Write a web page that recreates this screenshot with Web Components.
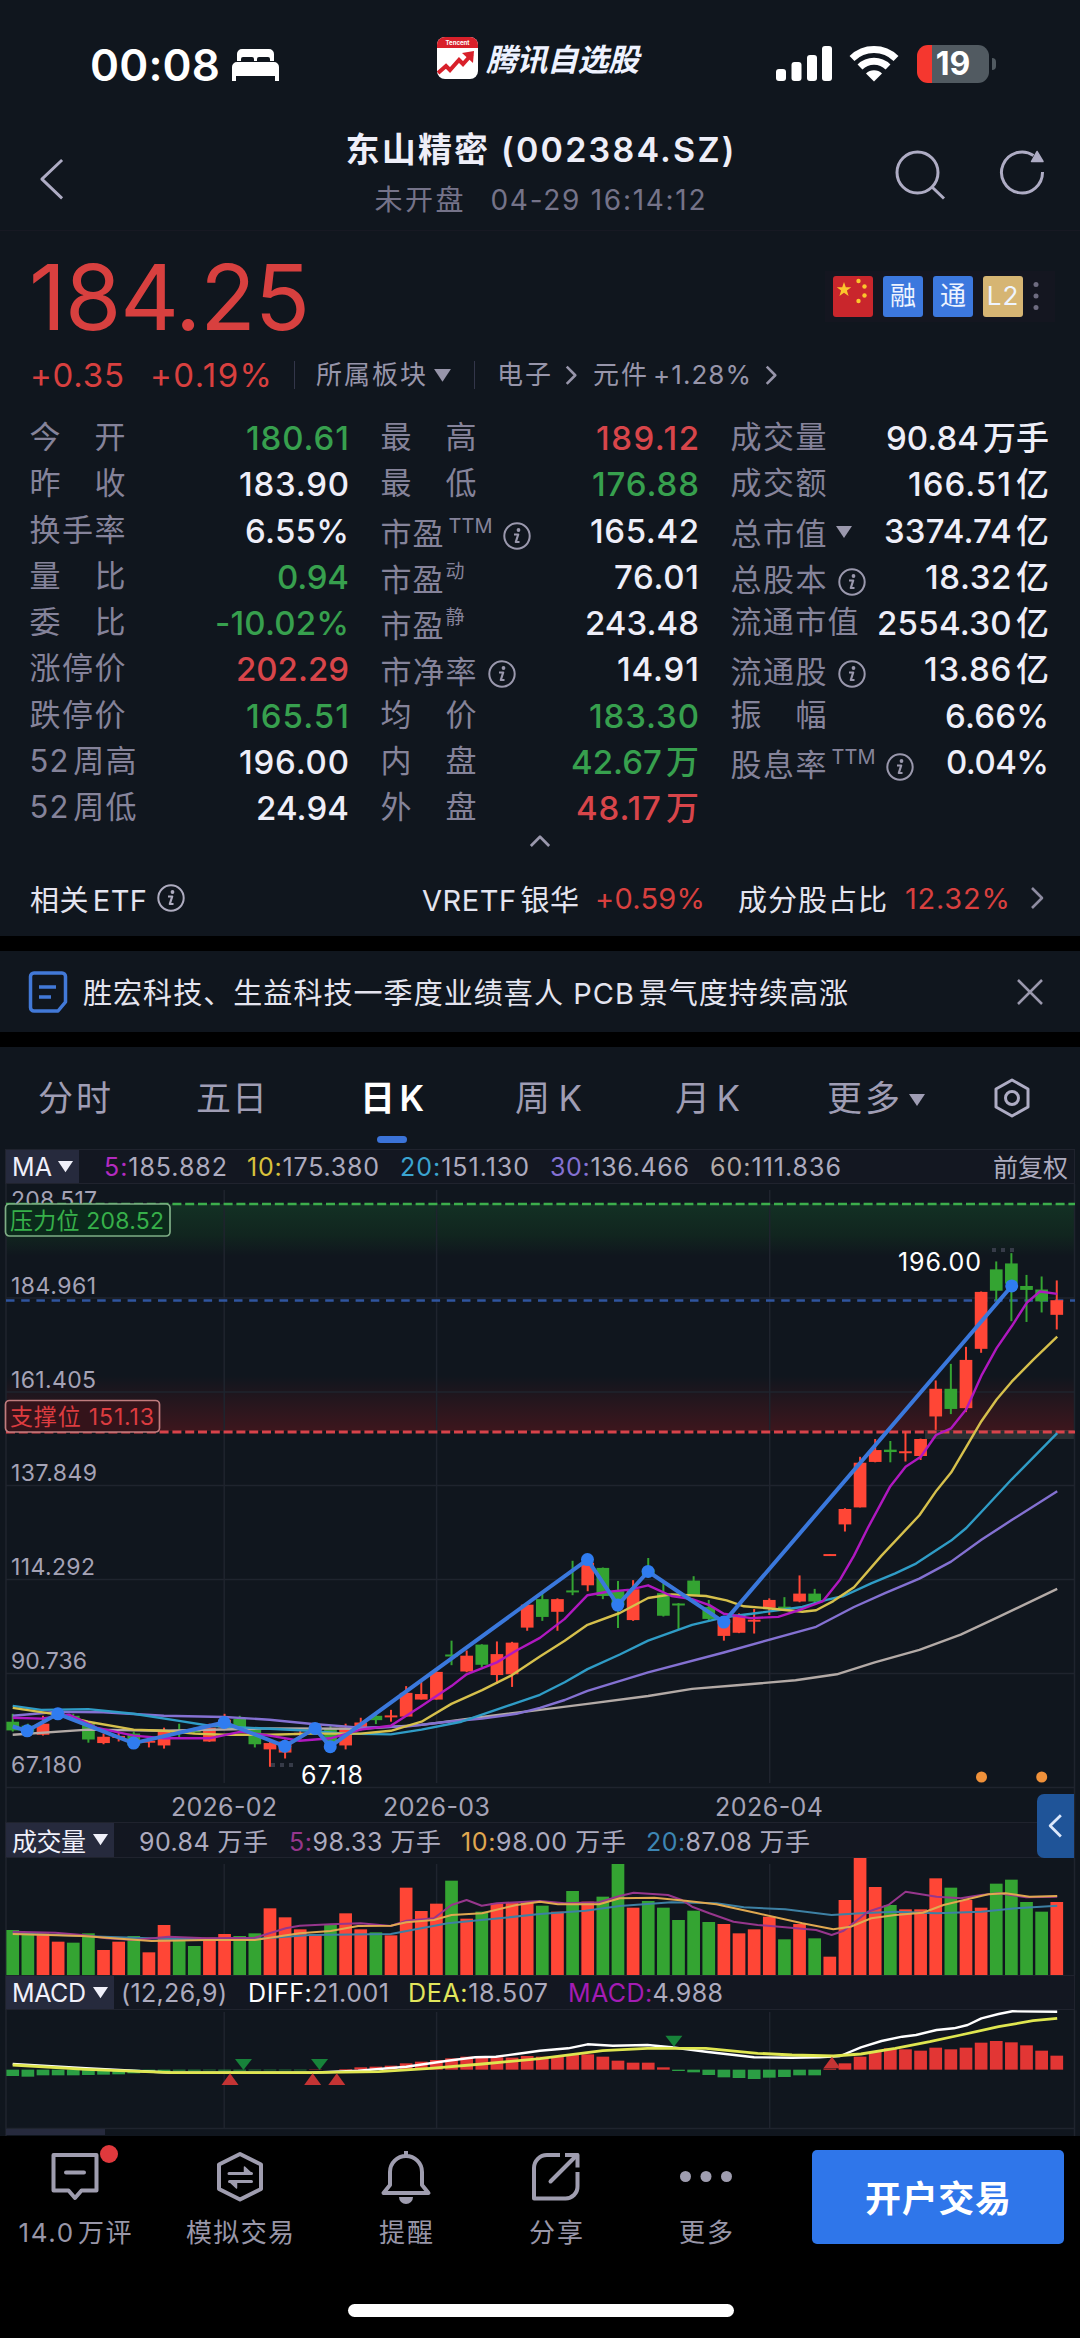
<!DOCTYPE html>
<html lang="zh-CN">
<head>
<meta charset="utf-8">
<meta name="viewport" content="width=1080">
<title>东山精密(002384.SZ)</title>
<style>
  body {
    margin: 0;
    background: #000;
    --bg: #10161e;
    --red: #d8403f;
    --muted: #85839a;
    --soft: #adabbf;
    --text: #eeeef8;
    font-family: Inter, "Noto Sans CJK SC", sans-serif;
    text-autospace: normal;
    color: var(--text);
  }
</style>
</head>
<body>
<stock-page></stock-page>

<script>
/**
 * Single-line label whose letter spacing is adjusted to fill a given width.
 * @extends HTMLElement
 */
class FitText extends HTMLElement {
  constructor() {
    super();
    this.attachShadow({ mode: "open" });
    // no whitespace around the slot: it would count towards the width
    this.shadowRoot.innerHTML =
      "<style>:host { display: inline-block; flex: none; white-space: pre; }</style><slot></slot>";
  }

  connectedCallback() {
    const target = Number(this.getAttribute("w"));
    const count = this.textContent.length;
    if (!target || count < 2) return;
    const spacing = (target - this.getBoundingClientRect().width) / (count - 1);
    const margin = parseFloat(getComputedStyle(this).marginRight) || 0;
    this.style.letterSpacing = `${spacing}px`;
    this.style.marginRight = `${margin - spacing}px`;
  }
}

/** Path data for the line icons, drawn in their own view boxes. */
const ICONS = {
  back: { box: "0 0 26 44", d: '<path d="M24 2 3 22 24 42"/>' },
  search: { box: "0 0 52 50", d: '<circle cx="22.500" cy="22.500" r="20.500"/><path d="m37 37 12 11.500"/>' },
  refresh: {
    box: "0 0 46 46",
    d: '<path d="M42.500 22A20.500 20.500 0 1 1 33.500 5.500"/><path d="M37 1.500 43 11.500H31.500z" fill="currentColor" stroke-width="1.500"/>',
  },
  info: {
    box: "0 0 28 28",
    d: '<circle cx="14" cy="14" r="12.700" stroke-width="2"/><circle cx="15.500" cy="8" r="1.900" fill="currentColor" stroke="none"/><path d="M11 12.500h4.200L12.800 20h3.700" stroke-width="2.200"/>',
  },
  chevron: { box: "0 0 14 24", d: '<path d="m2 2 10 10L2 22"/>' },
  up: { box: "0 0 24 14", d: '<path d="M2 12 12 2l10 10"/>' },
  down: { box: "0 0 18 14", d: '<path d="M1 1h16L9 13z" fill="currentColor" stroke="none"/>' },
  close: { box: "0 0 28 28", d: '<path d="m2 2 24 24M26 2 2 26"/>' },
  settings: {
    box: "0 0 36 40",
    d: '<path d="M18 2 34 11v18l-16 9L2 29V11z"/><circle cx="18" cy="20" r="6.500"/>',
  },
  note: {
    box: "0 0 40 42",
    d: '<path d="M6 2h28a3.500 3.500 0 0 1 3.500 3.500V31l-7.500 9H6a3.500 3.500 0 0 1-3.500-3.500v-31A3.500 3.500 0 0 1 6 2z"/><path d="M11 16h17M11 26h12"/>',
  },
  comment: {
    box: "0 0 52 52",
    d: '<path d="M4.500 5h43v35.500H32.500L26 48l-6.500-7.500h-15z"/><path d="M17 22.500h18" stroke-linecap="round"/>',
  },
  swap: {
    box: "0 0 52 52",
    d: '<path d="M26 4 47 14.500v24.500L26 49.500 5 39V14.500z"/><g stroke-width="3"><path d="M15 23.500h22.500M15.500 31.500h22" stroke-linecap="round"/><path d="M30.500 17v6.500h7zM22.500 38v-6.500h-7z" fill="currentColor" stroke-width="1.500"/></g>',
  },
  bell: {
    box: "0 0 52 54",
    d: '<path d="M26 1v5M10 35V22a16 16 0 0 1 32 0v13l6.500 8h-45z"/><path d="M19 47h14a7 7 0 0 1-14 0z" fill="currentColor" stroke="none"/>',
  },
  share: {
    box: "0 0 52 52",
    d: '<path d="M30 5H17A13 13 0 0 0 4 18v30.500h31A12 12 0 0 0 47.500 36V22"/><path d="M20.500 31.500 47 5"  stroke-linecap="round"/><path d="M35 5h12.500v12.500"/>',
  },
  dots: {
    box: "0 0 52 52",
    d: '<g fill="currentColor" stroke="none"><circle cx="5.500" cy="26.500" r="5.500"/><circle cx="26" cy="26.500" r="5.500"/><circle cx="46.500" cy="26.500" r="5.500"/></g>',
  },
};

/** Line icon picked by its name attribute. */
class LineIcon extends HTMLElement {
  connectedCallback() {
    const icon = ICONS[this.getAttribute("name")];
    const width = this.getAttribute("w");
    const stroke = this.getAttribute("stroke") ?? "3";
    if (!this.shadowRoot) this.attachShadow({ mode: "open" });
    this.shadowRoot.innerHTML = `
      <style>
        :host { display: block; flex: none; width: ${width}px; }
        svg { display: block; width: 100%; overflow: visible; }
      </style>
      <svg viewBox="${icon.box}" fill="none" stroke="currentColor" stroke-width="${stroke}"
        stroke-linejoin="round">${icon.d}</svg>`;
  }
}

/** Phone status bar with the app mark in the middle. */
class StatusBar extends HTMLElement {
  connectedCallback() {
    this.attachShadow({ mode: "open" }).innerHTML = `
      <style>
        :host { display: flex; height: 110px; align-items: flex-start; box-sizing: border-box; color: #fff; }
        .time { margin: 43px 0 0 90px; font-size: 44px; font-weight: 600; line-height: 44px; }
        .bed { margin: 48px 0 0 12px; }
        .mark { margin: 37px 0 0 158px; }
        .name { margin: 40px 0 0 8px; font-size: 31px; font-weight: 700; font-style: italic; line-height: 40px; color: #eef2ff; }
        .signal { margin: 46px 0 0 137px; }
        .wifi { margin: 45px 0 0 16px; }
        .battery {
          margin: 45px 0 0 18px; width: 72px; height: 38px; border-radius: 11px;
          background: linear-gradient(90deg, #f5372f 15px, #515a61 15px);
          font-size: 32px; font-weight: 700; line-height: 38px; text-align: center;
        }
        .nub { margin: 58px 0 0 3px; width: 4px; height: 12px; border-radius: 0 4px 4px 0; background: #515a61; }
      </style>
      <fit-text class="time" w="130">00:08</fit-text>
      <svg class="bed" width="47" height="34" viewBox="0 0 47 34" fill="#fff">
        <path d="M5 13V6a5 5 0 0 1 5-5h27a5 5 0 0 1 5 5v7h-4v-2a2 2 0 0 0-2-2H27a2 2 0 0 0-2 2v2h-3v-2a2 2 0 0 0-2-2H11a2 2 0 0 0-2 2v2z"/>
        <path d="M0 33V19a5 5 0 0 1 5-5h37a5 5 0 0 1 5 5v14h-4v-5H4v5z"/>
      </svg>
      <svg class="mark" width="41" height="42" viewBox="0 0 41 42">
        <rect width="41" height="42" rx="8" fill="#fff"/>
        <path d="M0 11V8a8 8 0 0 1 8-8h25a8 8 0 0 1 8 8v3z" fill="#d8202a"/>
        <text x="20.500" y="8" font-size="6" font-weight="700" fill="#fff" text-anchor="middle">Tencent</text>
        <path d="m1 36 8-7 4 4 9-10 4 4 9-10" fill="none" stroke="#d8202a" stroke-width="4"/>
        <path d="m25 16 12-2-1 12z" fill="#d8202a"/>
      </svg>
      <fit-text class="name" w="153">腾讯自选股</fit-text>
      <svg class="signal" width="57" height="36" viewBox="0 0 57 36" fill="#fff">
        <rect y="23" width="10" height="12" rx="3"/><rect x="15.500" y="16" width="10" height="19" rx="3"/>
        <rect x="31" y="9" width="10" height="26" rx="3"/><rect x="46" width="10" height="35" rx="3"/>
      </svg>
      <svg class="wifi" width="50" height="37" viewBox="0 0 50 37" fill="none" stroke="#fff" stroke-width="7">
        <path d="M3 13.500a31.500 31.500 0 0 1 44 0"/><path d="M11 22a20 20 0 0 1 28 0"/>
        <path d="m17 28.500 8 8 8-8a11.500 11.500 0 0 0-16 0z" fill="#fff" stroke="none"/>
      </svg>
      <div class="battery">19</div><div class="nub"></div>`;
  }
}

/** Title bar with back, search and refresh. */
class NavBar extends HTMLElement {
  connectedCallback() {
    this.attachShadow({ mode: "open" }).innerHTML = `
      <style>
        :host { display: flex; height: 121px; box-sizing: border-box; border-bottom: 1px solid #171923; color: #aeacc4; }
        .back { margin: 48px 0 0 39px; }
        .titles { flex: 1; display: flex; flex-direction: column; align-items: center; gap: 14px; padding: 20px 0 0 121px; }
        .name { font-size: 34px; font-weight: 600; line-height: 40px; color: var(--text); }
        .state { display: flex; gap: 27px; font-size: 28px; line-height: 32px; color: #757389; }
        .search { margin: 40px 0 0 0; }
        .refresh { margin: 40px 34px 0 53px; }
      </style>
      <line-icon class="back" name="back" w="25"></line-icon>
      <div class="titles">
        <fit-text class="name" w="389">东山精密 (002384.SZ)</fit-text>
        <div class="state"><fit-text w="89">未开盘</fit-text><fit-text w="215">04-29 16:14:12</fit-text></div>
      </div>
      <line-icon class="search" name="search" w="52"></line-icon>
      <line-icon class="refresh" name="refresh" w="46"></line-icon>`;
  }
}

/**
 * One label and value of the quote grid.
 * Attributes: label, sup, icon, value, w (value width), tone.
 */
class StatCell extends HTMLElement {
  connectedCallback() {
    const attr = (name) => this.getAttribute(name) ?? "";
    const sup = attr("sup");
    const icon = attr("icon");
    const lowered = sup || icon;
    const latin = /[A-Z]/.test(sup);
    const colors = { up: "#d8454a", down: "#37a04e" };
    this.attachShadow({ mode: "open" }).innerHTML = `
      <style>
        :host { display: flex; justify-content: space-between; height: 46.300px; line-height: 46.300px; }
        .label { display: flex; font-size: 31px; color: var(--muted); margin-left: -1.500px; padding-top: ${lowered ? 4 : 0}px; }
        .label fit-text { margin-top: -1px; }
        .sup { font-size: ${latin ? 20 : 19}px; line-height: 30px; margin-left: ${latin ? 5 : 2}px; }
        .info { margin: 10px 0 0 ${sup ? 10 : 11}px; color: #9a98ad; }
        .down { margin: 13px 0 0 8px; color: #9a98ad; }
        .value { font-size: 33px; font-weight: 500; color: ${colors[attr("tone")] ?? "var(--text)"}; }
      </style>
      <span class="label"><fit-text w="${attr("lw") || 96}">${attr("label")}</fit-text>
        ${sup ? `<fit-text class="sup" ${latin ? 'w="44"' : ""}>${sup}</fit-text>` : ""}
        ${icon ? `<line-icon class="${icon}" name="${icon}" w="${icon === "info" ? 28 : 18}"></line-icon>` : ""}
      </span>
      <fit-text class="value" w="${attr("w")}">${attr("value")}</fit-text>`;
  }
}

const STATS = [
  [
    ["今　开", "180.61", 103, "down"],
    ["昨　收", "183.90", 110],
    ["换手率", "6.55%", 104],
    ["量　比", "0.94", 72, "down"],
    ["委　比", "-10.02%", 134, "down"],
    ["涨停价", "202.29", 113, "up"],
    ["跌停价", "165.51", 103, "down"],
    ["52周高", "196.00", 110, "", { lw: 107 }],
    ["52周低", "24.94", 93, "", { lw: 107 }],
  ],
  [
    ["最　高", "189.12", 103, "up"],
    ["最　低", "176.88", 107, "down"],
    ["市盈", "165.42", 109, "", { sup: "TTM", icon: "info", lw: 63 }],
    ["市盈", "76.01", 85, "", { sup: "动", lw: 63 }],
    ["市盈", "243.48", 114, "", { sup: "静", lw: 63 }],
    ["市净率", "14.91", 82, "", { icon: "info" }],
    ["均　价", "183.30", 110, "down"],
    ["内　盘", "42.67万", 128, "down"],
    ["外　盘", "48.17万", 123, "up"],
  ],
  [
    ["成交量", "90.84万手", 163],
    ["成交额", "166.51亿", 141],
    ["总市值", "3374.74亿", 165, "", { icon: "down" }],
    ["总股本", "18.32亿", 124, "", { icon: "info" }],
    ["流通市值", "2554.30亿", 172, "", { lw: 128 }],
    ["流通股", "13.86亿", 125, "", { icon: "info" }],
    ["振　幅", "6.66%", 104],
    ["股息率", "0.04%", 103, "", { sup: "TTM", icon: "info" }],
  ],
];

/** Price, badges, sector links, the quote grid and the ETF row. */
class QuotePanel extends HTMLElement {
  connectedCallback() {
    const cell = ([label, value, w, tone = "", extra = {}]) => {
      const more = Object.entries(extra).map(([k, v]) => `${k}="${v}"`).join(" ");
      return `<stat-cell label="${label}" value="${value}" w="${w}" tone="${tone}" ${more}></stat-cell>`;
    };
    this.attachShadow({ mode: "open" }).innerHTML = `
      <style>
        :host { display: flex; flex-direction: column; height: 705px; box-sizing: border-box; padding: 0 31px; }
        .top { display: flex; align-items: center; height: 132px; }
        .price { font-size: 91px; line-height: 132px; margin-left: -2px; color: var(--red); }
        .badges { display: flex; align-items: center; gap: 10px; margin: 0 -6px 2px auto; padding: 5px 16px 5px 8px; background: #141620; }
        .badge { width: 40px; height: 41px; border-radius: 3px; font-size: 26px; line-height: 40px; text-align: center; color: #eef4ff; background: #3c78de; }
        .cn { background: #c9262c; }
        .l2 { background: #d6b573; font-size: 26px; letter-spacing: 1px; }
        .more { width: 6px; height: 30px; }
        .change { display: flex; align-items: center; height: 24px; line-height: 24px; font-size: 26px; color: #9795aa; }
        .move { font-size: 33px; color: var(--red); }
        .line { width: 1px; height: 28px; background: #33364a; }
        .grid { display: grid; grid-template-columns: 318px 317px 317px; column-gap: 33px; margin-top: 28px; }
        .fold { display: flex; justify-content: center; padding-top: 3px; color: #9a98ad; }
        .etf { display: flex; align-items: center; height: 74px; box-sizing: border-box; padding-bottom: 2px; margin-top: auto; font-size: 29px; color: #e4e4ef; }
        .up { color: var(--red); }
      </style>
      <div class="top">
        <fit-text class="price" w="281">184.25</fit-text>
        <div class="badges">
          <svg class="badge cn" viewBox="0 0 40 41" fill="#fbc52c">
            <path d="m11 6 1.800 5.300h5.500l-4.400 3.300 1.700 5.400-4.600-3.300L6.400 20l1.700-5.400-4.400-3.300h5.500z"/>
            <circle cx="25.500" cy="5" r="2.200"/><circle cx="31.500" cy="10.500" r="2.200"/><circle cx="31.500" cy="19.500" r="2.200"/><circle cx="25.500" cy="25" r="2.200"/>
          </svg>
          <div class="badge">融</div><div class="badge">通</div><div class="badge l2">L2</div>
          <svg class="more" viewBox="0 0 6 30" fill="#6e6c80"><circle cx="3" cy="3.500" r="2.500"/><circle cx="3" cy="15" r="2.500"/><circle cx="3" cy="26.500" r="2.500"/></svg>
        </div>
      </div>
      <div class="change">
        <fit-text class="move" w="94" style="margin-left:-1px">+0.35</fit-text>
        <fit-text class="move" w="122" style="margin-left:26px">+0.19%</fit-text>
        <span class="line" style="margin:0 21px 0 22px"></span>
        <fit-text w="110">所属板块</fit-text>
        <line-icon name="down" w="19" style="margin-left:7px"></line-icon>
        <span class="line" style="margin:0 22px"></span>
        <fit-text w="54">电子</fit-text>
        <line-icon name="chevron" w="12" stroke="3" style="margin-left:14px"></line-icon>
        <fit-text w="54" style="margin-left:16px">元件</fit-text>
        <fit-text w="98" style="margin-left:6px">+1.28%</fit-text>
        <line-icon name="chevron" w="12" style="margin-left:14px"></line-icon>
      </div>
      <div class="grid">${STATS.map((col) => `<div>${col.map(cell).join("")}</div>`).join("")}</div>
      <div class="fold"><line-icon name="up" w="22"></line-icon></div>
      <div class="etf">
        <fit-text w="117" style="margin-left:-1px">相关ETF</fit-text>
        <line-icon name="info" w="28" style="margin-left:10px;color:#aeacc0"></line-icon>
        <fit-text w="157" style="margin-left:auto">VRETF银华</fit-text>
        <fit-text class="up" w="110" style="margin-left:16px">+0.59%</fit-text>
        <fit-text w="149" style="margin-left:33px">成分股占比</fit-text>
        <fit-text class="up" w="105" style="margin-left:18px">12.32%</fit-text>
        <line-icon name="chevron" w="14" stroke="2.600" style="margin:0 5px 0 20px;color:#8d8ba0"></line-icon>
      </div>`;
  }
}

class NewsBar extends HTMLElement {
  connectedCallback() {
    this.attachShadow({ mode: "open" }).innerHTML = `
      <style>
        :host { display: flex; align-items: center; height: 81px; box-sizing: border-box; padding: 0 36px 0 28px; font-size: 29px; color: #e4e4ef; }
        .note { color: #4279d8; margin-right: 15px; }
        .text { padding-bottom: 2px; }
        .close { margin-left: auto; color: #9a98ad; }
      </style>
      <line-icon class="note" name="note" w="40" stroke="3.500"></line-icon>
      <fit-text class="text" w="765">胜宏科技、生益科技一季度业绩喜人 PCB景气度持续高涨</fit-text>
      <line-icon class="close" name="close" w="28" stroke="2.500"></line-icon>`;
  }
}

/** Chart period switcher. */
class PeriodTabs extends HTMLElement {
  connectedCallback() {
    const tabs = [
      ["分时", 73, 38], ["五日", 71, 85], ["日K", 64, 93, true], ["周K", 67, 91], ["月K", 65, 93], ["更多", 73, 87],
    ];
    this.attachShadow({ mode: "open" }).innerHTML = `
      <style>
        :host { display: flex; height: 102px; font-size: 35px; color: #9f9db4; }
        .tab { display: flex; flex-direction: column; align-items: center; padding-top: 31px; line-height: 40px; }
        .on { color: #fff; font-weight: 600; }
        .on::after { content: ""; width: 30px; height: 7px; margin-top: 18px; border-radius: 4px; background: #3b73d8; }
        .down { margin: 46px 0 0 8px; }
        .settings { margin: 31px 0 0 68px; color: #aeacc4; }
      </style>
      ${tabs.map(([name, w, gap, on]) => `<div class="tab ${on ? "on" : ""}" style="margin-left:${gap}px"><fit-text w="${w}">${name}</fit-text></div>`).join("")}
      <line-icon class="down" name="down" w="18"></line-icon>
      <line-icon class="settings" name="settings" w="36"></line-icon>`;
  }
}

/**
 * Header row of an indicator: its name, then the values passed in the slot.
 * Attributes: name, h, w (box width), lw (name width).
 */
class IndicatorBar extends HTMLElement {
  connectedCallback() {
    const attr = (name) => this.getAttribute(name);
    this.attachShadow({ mode: "open" }).innerHTML = `
      <style>
        :host {
          display: flex; align-items: center; height: ${attr("h")}px; box-sizing: border-box; margin: 0 5px 0 5px;
          border: 1px solid #20232e; background: #131721; font-size: 25px; color: var(--soft); position: relative;
        }
        .name { display: flex; align-items: center; justify-content: space-between; width: ${attr("w")}px; height: 100%;
          box-sizing: border-box; padding: 0 5px 0 6px; background: #262a3d; color: #f0f0fa; flex: none; }
      </style>
      <div class="name"><fit-text w="${attr("lw")}">${attr("name")}</fit-text><line-icon name="down" w="17"></line-icon></div>
      <slot></slot>`;
  }
}

/*
 * Chart geometry. Columns are 43.940 units apart; charts share the x scale,
 * the price chart and the lower charts each have their own y scale.
 */
const STEP = 43.94;
const BAR = 12.7;
const UP = "#ff4636";
const DOWN = "#34a432";
const GRID = "#1f242e";
const MONTHS = [224.2, 436.6, 769.7];

const toX = (u) => u / 2.904;
const columnX = (i) => toX(37 + i * STEP);
const priceY = (u) => 1180 + u / 2.529;
const lowerY = (u) => 1640 + u / 3;

/**
 * Builds a polyline from a flat "x,y x,y" list.
 * @param {string} list - Points in chart units
 * @param {(u: number) => number} toY - y scale
 * @param {string} color - Stroke colour
 * @param {number} width - Stroke width
 * @returns {string} SVG markup
 */
function line(list, toY, color, width = 2) {
  const points = list
    .split(" ")
    .map((pair) => pair.split(",").map(Number))
    .map(([x, y]) => `${toX(x).toFixed(1)},${toY(y).toFixed(1)}`)
    .join(" ");
  return `<polyline points="${points}" fill="none" stroke="${color}" stroke-width="${width}" stroke-linejoin="round"/>`;
}

const monthLines = (top, bottom) =>
  MONTHS.map((x) => `<path d="M${x} ${top}V${bottom}" stroke="${GRID}" stroke-width="1.500"/>`).join("");

// colour, high, body top, body bottom, low
const CANDLES = `G 1350 1370 1392 1395|G 1375 1380 1395 1400|R 1355 1375 1403 1405|R 1340 1345 1360 1365|G 1350 1355 1362 1368
G 1370 1375 1415 1423|R 1400 1408 1424 1427|R 1395 1406 1410 1420|G 1395 1400 1430 1435|R 1410 1418 1422 1435
R 1385 1395 1430 1438|G 1375 1392 1400 1410|G 1385 1392 1396 1400|R 1375 1385 1420 1421|R 1350 1365 1385 1390
G 1355 1363 1387 1390|G 1385 1390 1427 1435|R 1420 1424 1440 1484|R 1415 1420 1448 1463|R 1390 1398 1404 1415
R 1375 1380 1395 1400|G 1380 1388 1425 1430|R 1375 1385 1430 1440|R 1360 1372 1388 1392|G 1350 1355 1366 1376
R 1340 1354 1358 1370|R 1280 1297 1357 1358|R 1264 1300 1314 1314|R 1243 1244 1314 1314|G 1165 1200 1204 1227
R 1190 1203 1243 1245|G 1174 1175 1226 1232|R 1167 1199 1252 1274|R 1168 1170 1250 1282|R 1072 1074 1132 1140
G 1045 1060 1105 1115|R 1058 1060 1092 1140|G 963 1038 1043 1050|R 960 968 1025 1040|G 980 981 1052 1060
G 1014 1040 1075 1133|R 1012 1035 1113 1115|G 956 985 1000 1005|G 1020 1045 1102 1104|G 1070 1071 1076 1138
G 1002 1013 1050 1052|G 1062 1080 1110 1114|R 1105 1110 1153 1165|R 1096 1100 1145 1146|R 1085 1112 1116 1147
R 1058 1062 1082 1100|G 1055 1079 1084 1090|R 1000 1046 1066 1068|G 1034 1046 1066 1075|R 946 946 951 951
R 830 832 871 889|R 700 715 828 828|R 655 683 713 714|G 660 682 688 714|R 636 686 691 712
R 654 655 698 708|R 507 528 598 632|G 465 528 579 592|R 422 455 577 587|R 282 283 427 437
G 206 226 280 305|G 185 211 262 357|G 240 268 278 359|G 244 277 307 335|R 254 304 341 378`
  .split(/[|\n]/)
  .map((row) => row.split(" "));

const ZIGZAG = "37,1382 79,1393 168,1350 388,1424 651,1372 827,1432 915,1387 959,1433 1706,960 1794,1075 1882,990 2102,1118 2938,268";

const PRICE_LINES = [
  ["#b3aaa6", "37,1403 256,1390 476,1393 783,1387 1047,1388 1224,1378 1400,1358 1568,1340 1706,1325 1882,1305 2010,1287 2140,1278 2310,1265 2430,1250 2540,1220 2670,1188 2790,1150 2900,1105 3070,1034"],
  ["#8471d2", "37,1355 168,1345 300,1346 476,1355 651,1358 783,1365 900,1375 1047,1385 1180,1382 1300,1370 1400,1362 1500,1350 1568,1335 1640,1315 1706,1292 1882,1245 2102,1195 2370,1130 2480,1080 2570,1045 2670,1008 2762,965 2850,910 2938,860 3070,787"],
  ["#2f9cc6", "37,1330 120,1340 256,1338 388,1350 520,1368 608,1380 783,1388 900,1393 1000,1400 1135,1402 1224,1390 1340,1370 1440,1340 1568,1302 1640,1270 1706,1237 1800,1200 1882,1165 2010,1125 2102,1106 2200,1095 2330,1080 2400,1062 2450,1052 2530,1020 2600,995 2660,970 2762,912 2806,880 2860,830 2938,757 3070,640"],
  ["#d6c04c", "37,1335 168,1352 256,1370 388,1390 476,1393 564,1400 651,1403 783,1403 900,1400 1047,1400 1135,1393 1224,1370 1311,1325 1400,1290 1487,1252 1568,1205 1640,1165 1706,1125 1800,1095 1882,1057 1950,1048 2050,1052 2110,1063 2160,1078 2230,1083 2330,1092 2370,1088 2420,1065 2480,1030 2560,950 2670,848 2720,785 2762,740 2806,675 2850,610 2894,555 2938,510 3000,455 3070,396"],
  ["#b018c0", "37,1360 120,1362 200,1352 280,1385 388,1405 476,1412 608,1412 700,1395 783,1405 870,1418 960,1412 1047,1390 1135,1380 1224,1330 1311,1280 1355,1250 1443,1220 1500,1190 1568,1158 1640,1110 1706,1050 1760,1042 1830,1036 1882,1025 1950,1052 2010,1060 2060,1075 2102,1097 2180,1108 2260,1105 2330,1085 2390,1065 2440,1010 2480,950 2520,880 2585,775 2630,725 2674,700 2718,645 2762,628 2806,580 2850,495 2894,425 2938,370 2982,310 3020,282 3070,288"],
];

/** Daily candles with moving averages, support and resistance. */
class CandleChart extends HTMLElement {
  connectedCallback() {
    const candles = CANDLES.map(([side, high, top, bottom, low], i) => {
      const x = columnX(i);
      const y = priceY(+top);
      const color = side === "R" ? UP : DOWN;
      return `<path d="M${x} ${priceY(+high)}V${priceY(+low)}" stroke="${color}" stroke-width="2"/>
        <rect x="${x - BAR / 2}" y="${y}" width="${BAR}" height="${Math.max(priceY(+bottom) - y, 2)}" fill="${color}"/>`;
    }).join("");
    const turns = ZIGZAG.split(" ").slice(1).map((pair) => {
      const [x, y] = pair.split(",").map(Number);
      return `<circle cx="${toX(x)}" cy="${priceY(y)}" r="6.500" fill="#2f7cf0"/>`;
    }).join("");
    const label = (x, y, w, text, size = 23, fill = "#a5a3b6") =>
      `<text x="${x}" y="${y}" font-size="${size}" fill="${fill}" textLength="${w}">${text}</text>`;
    this.attachShadow({ mode: "open" }).innerHTML = `
      <style>:host, svg { display: block; }</style>
      <svg width="1080" height="638" viewBox="0 1184 1080 638">
        <defs>
          <linearGradient id="high" x2="0" y2="1"><stop stop-color="#133124"/><stop offset=".6" stop-color="#11251f"/><stop offset="1" stop-color="#10161e"/></linearGradient>
          <linearGradient id="low" x2="0" y2="1"><stop stop-color="#10161e"/><stop offset="1" stop-color="#3d161d"/></linearGradient>
        </defs>
        <rect x="6" y="1204" width="1069" height="52" fill="url(#high)"/>
        <rect x="6" y="1376" width="1069" height="55" fill="url(#low)"/>
        <rect x="925" y="1430" width="150" height="9" fill="#8a8a80" opacity=".22"/>
        <path d="M6 1298H1075M6 1392H1075M6 1485.500H1075M6 1579.500H1075M6 1673.500H1075M6 1787.500H1075M6 1184V1822M1074.500 1184V1822"
          fill="none" stroke="${GRID}" stroke-width="1.500"/>
        ${monthLines(1190, 1783)}
        ${label(11, 1207.5, 86, "208.517")}
        ${label(11, 1293.5, 85, "184.961")}
        ${label(11, 1387.5, 85, "161.405")}
        ${label(11, 1481, 86, "137.849")}
        ${label(11, 1574.5, 84, "114.292")}
        ${label(11, 1668.5, 76, "90.736")}
        ${label(11, 1773, 71, "67.180")}
        <path d="M6 1204H1075" stroke="#3cae4c" stroke-width="2.500" stroke-dasharray="9 3.800"/>
        <path d="M6 1300.500H1075" stroke="#2f55a0" stroke-width="2.500" stroke-dasharray="8.500 6.700"/>
        <path d="M6 1432H1075" stroke="#d8434a" stroke-width="3" stroke-dasharray="9 3.800"/>
        ${candles}
        ${PRICE_LINES.map(([color, list]) => line(list, priceY, color, 2.4)).join("")}
        ${line(ZIGZAG, priceY, "#3a78dc", 4)}
        ${turns}
        <rect x="5.500" y="1204" width="164.500" height="32" rx="4" fill="#0b2a1b" stroke="#7fae86" stroke-width="1.700"/>
        ${label(10, 1228.5, 154, "压力位 208.52", 23, "#37b04a")}
        <rect x="5.500" y="1400.500" width="154" height="31.500" rx="4" fill="#34131a" stroke="#c07c7e" stroke-width="1.700"/>
        ${label(10, 1424.5, 144, "支撑位 151.13", 23, "#dc3c40")}
        ${label(898, 1271, 83, "196.00", 25, "#fff")}
        ${label(301, 1784, 62, "67.18", 25, "#fff")}
        <path d="M992 1250h22M271 1765h22" stroke="#363b48" stroke-width="4" stroke-dasharray="4 5"/>
        <circle cx="981.500" cy="1777" r="5.500" fill="#f0913a"/><circle cx="1041.700" cy="1777" r="5.500" fill="#f0913a"/>
        ${label(171, 1816, 106, "2026-02", 25)}
        ${label(383, 1816, 107, "2026-03", 25)}
        ${label(715, 1816, 108, "2026-04", 25)}
      </svg>`;
  }
}

const VOLUMES = `G870 G885 R880 R905 G908 G880 R930 R905 G888 R937 R855 G895 G918 R893 R882 G888 G880 R805 R832 R868
R882 G852 R820 R868 G877 R886 R743 R813 R791 G722 R836 G815 R790 R788 R786 G797 R815 G753 R785 G770
G672 R803 G783 G803 G840 G812 G846 R852 R880 R868 R830 G898 R852 G895 R950 R780 R654 R741 G795 R808
R808 R715 G743 R780 R803 G731 G719 G786 G815 R786`.split(/\s+/);

const VOLUME_LINES = [
  ["#3d80a4", "37,880 300,890 500,897 740,897 900,885 1135,882 1300,850 1450,835 1568,822 1700,812 1800,798 1950,787 2080,790 2160,802 2280,808 2415,825 2500,820 2600,815 2720,820 2850,815 2950,805 3070,797"],
  ["#96368c", "37,875 160,878 240,885 310,895 388,900 490,890 600,895 740,893 830,865 870,857 960,853 1047,850 1135,858 1180,842 1260,835 1311,795 1355,780 1399,797 1443,790 1568,783 1640,790 1740,787 1800,768 1840,758 1940,765 1980,780 2010,800 2060,820 2130,845 2200,855 2280,862 2370,870 2415,885 2450,872 2520,815 2580,795 2630,755 2720,770 2790,775 2850,765 2900,760 2980,772 3070,770"],
  ["#e0a850", "37,882 240,888 440,903 600,900 740,900 870,880 960,873 1040,858 1135,857 1180,847 1260,840 1311,825 1400,820 1500,795 1568,785 1620,793 1740,793 1800,775 1900,773 1990,782 2080,793 2200,820 2330,850 2420,868 2470,860 2530,835 2600,825 2680,818 2740,795 2800,780 2870,763 2920,760 2990,770 3070,768"],
];

/** Daily turnover columns. */
class VolumeChart extends HTMLElement {
  connectedCallback() {
    const bars = VOLUMES.map((item, i) => {
      const y = lowerY(Number(item.slice(1)));
      return `<rect x="${columnX(i) - BAR / 2}" y="${y}" width="${BAR}" height="${1975 - y}" fill="${item[0] === "R" ? UP : DOWN}"/>`;
    }).join("");
    this.attachShadow({ mode: "open" }).innerHTML = `
      <style>:host, svg { display: block; }</style>
      <svg width="1080" height="117" viewBox="0 1858 1080 117">
        <path d="M6 1858V1975M1074.500 1858V1975" stroke="${GRID}" stroke-width="1.500"/>
        ${monthLines(1864, 1975)}${bars}
        ${VOLUME_LINES.map(([color, list]) => line(list, lowerY, color)).join("")}
      </svg>`;
  }
}

const MACD_BARS = [
  1308, 1310, 1306, 1306, 1306, 1305, 1304, 1303, 1300, 1297, 1294, 1292, 1292, 1291, 1292, 1292, 1291, 1291, 1291, 1291,
  1288, 1289, 1287, 1282, 1280, 1277, 1270, 1265, 1260, 1255, 1250, 1250, 1252, 1253, 1248, 1250, 1250, 1245, 1243, 1250,
  1262, 1268, 1268, 1282, 1293, 1297, 1305, 1312, 1314, 1317, 1313, 1311, 1306, 1306, 1286, 1270, 1250, 1235, 1225, 1228,
  1232, 1223, 1228, 1223, 1208, 1203, 1207, 1216, 1232, 1247,
];
const MACD_ZERO = 1289;

/** MACD histogram, its two lines and the crossing marks. */
class MacdChart extends HTMLElement {
  connectedCallback() {
    const zero = lowerY(MACD_ZERO);
    const bars = MACD_BARS.map((v, i) => {
      const y = lowerY(v);
      return `<rect x="${columnX(i) - BAR / 2}" y="${Math.min(y, zero)}" width="${BAR}" height="${Math.abs(y - zero)}" fill="${v < MACD_ZERO ? "#e23634" : "#2b9e44"}"/>`;
    }).join("");
    const mark = (u, top, up) => {
      const [a, b] = up ? [lowerY(top + 35), lowerY(top)] : [lowerY(top), lowerY(top + 33)];
      const x = toX(u);
      return `<path d="M${x - 8.5} ${a}H${x + 8.5}L${x} ${b}z" fill="${up ? "#c43434" : "#17833a"}"/>`;
    };
    this.attachShadow({ mode: "open" }).innerHTML = `
      <style>:host, svg { display: block; }</style>
      <svg width="1080" height="126" viewBox="0 2010 1080 126">
        <path d="M6 2010V2136M1074.500 2010V2136M6 2128.500H1075" fill="none" stroke="${GRID}" stroke-width="1.500"/>
        ${monthLines(2012, 2128)}
        <rect x="6" y="2129" width="99" height="6" fill="#262a3d"/>
        ${bars}
        ${line("37,1272 250,1285 500,1298 700,1298 900,1298 1040,1292 1180,1280 1300,1262 1380,1252 1440,1250 1500,1242 1568,1232 1650,1225 1706,1213 1780,1217 1880,1215 1950,1222 2050,1235 2190,1252 2300,1253 2380,1252 2440,1248 2500,1222 2560,1203 2620,1190 2660,1185 2720,1170 2770,1165 2810,1155 2850,1135 2900,1122 2940,1114 3070,1115", lowerY, "#fff", 2.4)}
        ${line("37,1275 250,1288 500,1298 900,1298 1100,1295 1250,1285 1400,1272 1568,1256 1750,1232 1880,1225 2050,1225 2200,1240 2300,1245 2420,1248 2500,1242 2600,1225 2700,1205 2790,1185 2900,1160 3000,1142 3070,1135", lowerY, "#dfe650", 2.8)}
        ${mark(707, 1257, false)}${mark(928, 1257, false)}${mark(1957, 1187, false)}
        ${mark(668, 1300, true)}${mark(908, 1300, true)}${mark(978, 1300, true)}${mark(2416, 1250, true)}
      </svg>`;
  }
}

/** Icon over a caption; the caption is the slotted text. */
class ToolItem extends HTMLElement {
  connectedCallback() {
    const dot = this.hasAttribute("dot");
    this.attachShadow({ mode: "open" }).innerHTML = `
      <style>
        :host { display: flex; flex-direction: column; align-items: center; width: 110px; flex: none; position: relative; font-size: 26px; line-height: 36px; color: #9896a8; }
        line-icon { margin-bottom: 13px; height: 52px; color: #9f9daf; }
        .dot { position: absolute; left: 80px; top: -5px; width: 18px; height: 18px; border-radius: 50%; background: #e0393d; }
      </style>
      <line-icon name="${this.getAttribute("icon")}" w="52" stroke="4"></line-icon>
      <slot></slot>${dot ? '<span class="dot"></span>' : ""}`;
  }
}

/** Bottom actions, trade button and home indicator. */
class ActionBar extends HTMLElement {
  connectedCallback() {
    this.attachShadow({ mode: "open" }).innerHTML = `
      <style>
        :host { display: flex; flex-direction: column; height: 202px; background: #000; }
        .row { display: flex; height: 108px; box-sizing: border-box; padding: 14px 16px 0 20px; }
        .trade { margin-left: auto; width: 252px; height: 94px; border-radius: 5px; background: #2f76ea; color: #fff;
          display: flex; align-items: center; justify-content: center; font-size: 36px; font-weight: 600; }
        .trade fit-text { padding-bottom: 2px; }
        .home { width: 386px; height: 13px; border-radius: 7px; background: #fff; margin: 60px auto 0 348px; }
      </style>
      <div class="row">
        <tool-item icon="comment" dot><fit-text w="113">14.0万评</fit-text></tool-item>
        <tool-item icon="swap" style="margin-left:55px"><fit-text w="108">模拟交易</fit-text></tool-item>
        <tool-item icon="bell" style="margin-left:56px"><fit-text w="54">提醒</fit-text></tool-item>
        <tool-item icon="share" style="margin-left:40px"><fit-text w="54">分享</fit-text></tool-item>
        <tool-item icon="dots" style="margin-left:40px"><fit-text w="54">更多</fit-text></tool-item>
        <div class="trade"><fit-text w="146">开户交易</fit-text></div>
      </div>
      <div class="home"></div>`;
  }
}

/** Whole quote screen. */
class StockPage extends HTMLElement {
  connectedCallback() {
    this.attachShadow({ mode: "open" }).innerHTML = `
      <style>
        :host { display: block; width: 1080px; height: 2338px; overflow: hidden; }
        section { background: var(--bg); }
        .news { margin: 15px 0; }
        .toggle { position: absolute; right: 0; bottom: -1px; width: 37px; height: 64px; border-radius: 7px 0 0 7px; background: #1f5498;
          display: flex; align-items: center; justify-content: center; color: #dce8fb; }
        .toggle line-icon { transform: scaleX(-1); }
      </style>
      <section><status-bar></status-bar><nav-bar></nav-bar><quote-panel></quote-panel></section>
      <section class="news"><news-bar></news-bar></section>
      <section>
        <period-tabs></period-tabs>
        <indicator-bar name="MA" h="35" w="73" lw="40">
          <fit-text w="123" style="margin-left:25px"><span style="color:#b32bc0">5:</span>185.882</fit-text>
          <fit-text w="132" style="margin-left:20px"><span style="color:#d8c23c">10:</span>175.380</fit-text>
          <fit-text w="129" style="margin-left:21px"><span style="color:#3ba4d0">20:</span>151.130</fit-text>
          <fit-text w="139" style="margin-left:21px"><span style="color:#8471d2">30:</span>136.466</fit-text>
          <fit-text w="131" style="margin-left:21px"><span style="color:#b3aaa6">60:</span>111.836</fit-text>
          <fit-text w="75" style="margin:0 6px 2px auto">前复权</fit-text>
        </indicator-bar>
        <candle-chart></candle-chart>
        <indicator-bar name="成交量" h="36" w="108" lw="74">
          <fit-text w="129" style="margin-left:25px">90.84 万手</fit-text>
          <fit-text w="152" style="margin-left:21px"><span style="color:#96368c">5:</span>98.33 万手</fit-text>
          <fit-text w="165" style="margin-left:20px"><span style="color:#e0a850">10:</span>98.00 万手</fit-text>
          <fit-text w="164" style="margin-left:20px"><span style="color:#3d86b4">20:</span>87.08 万手</fit-text>
          <div class="toggle"><line-icon name="chevron" w="15" stroke="2.600"></line-icon></div>
        </indicator-bar>
        <volume-chart></volume-chart>
        <indicator-bar name="MACD" h="35" w="108" lw="74">
          <fit-text w="106" style="margin-left:7px">(12,26,9)</fit-text>
          <fit-text w="141" style="margin-left:21px"><span style="color:#fff">DIFF:</span>21.001</fit-text>
          <fit-text w="140" style="margin-left:19px"><span style="color:#e2e65c">DEA:</span>18.507</fit-text>
          <fit-text w="155" style="margin-left:20px"><span style="color:#a41cb4">MACD:</span>4.988</fit-text>
        </indicator-bar>
        <macd-chart></macd-chart>
      </section>
      <action-bar></action-bar>`;
  }
}

customElements.define("fit-text", FitText);
customElements.define("line-icon", LineIcon);
customElements.define("status-bar", StatusBar);
customElements.define("nav-bar", NavBar);
customElements.define("stat-cell", StatCell);
customElements.define("quote-panel", QuotePanel);
customElements.define("news-bar", NewsBar);
customElements.define("period-tabs", PeriodTabs);
customElements.define("indicator-bar", IndicatorBar);
customElements.define("candle-chart", CandleChart);
customElements.define("volume-chart", VolumeChart);
customElements.define("macd-chart", MacdChart);
customElements.define("tool-item", ToolItem);
customElements.define("action-bar", ActionBar);
customElements.define("stock-page", StockPage);
</script>
</body>
</html>
